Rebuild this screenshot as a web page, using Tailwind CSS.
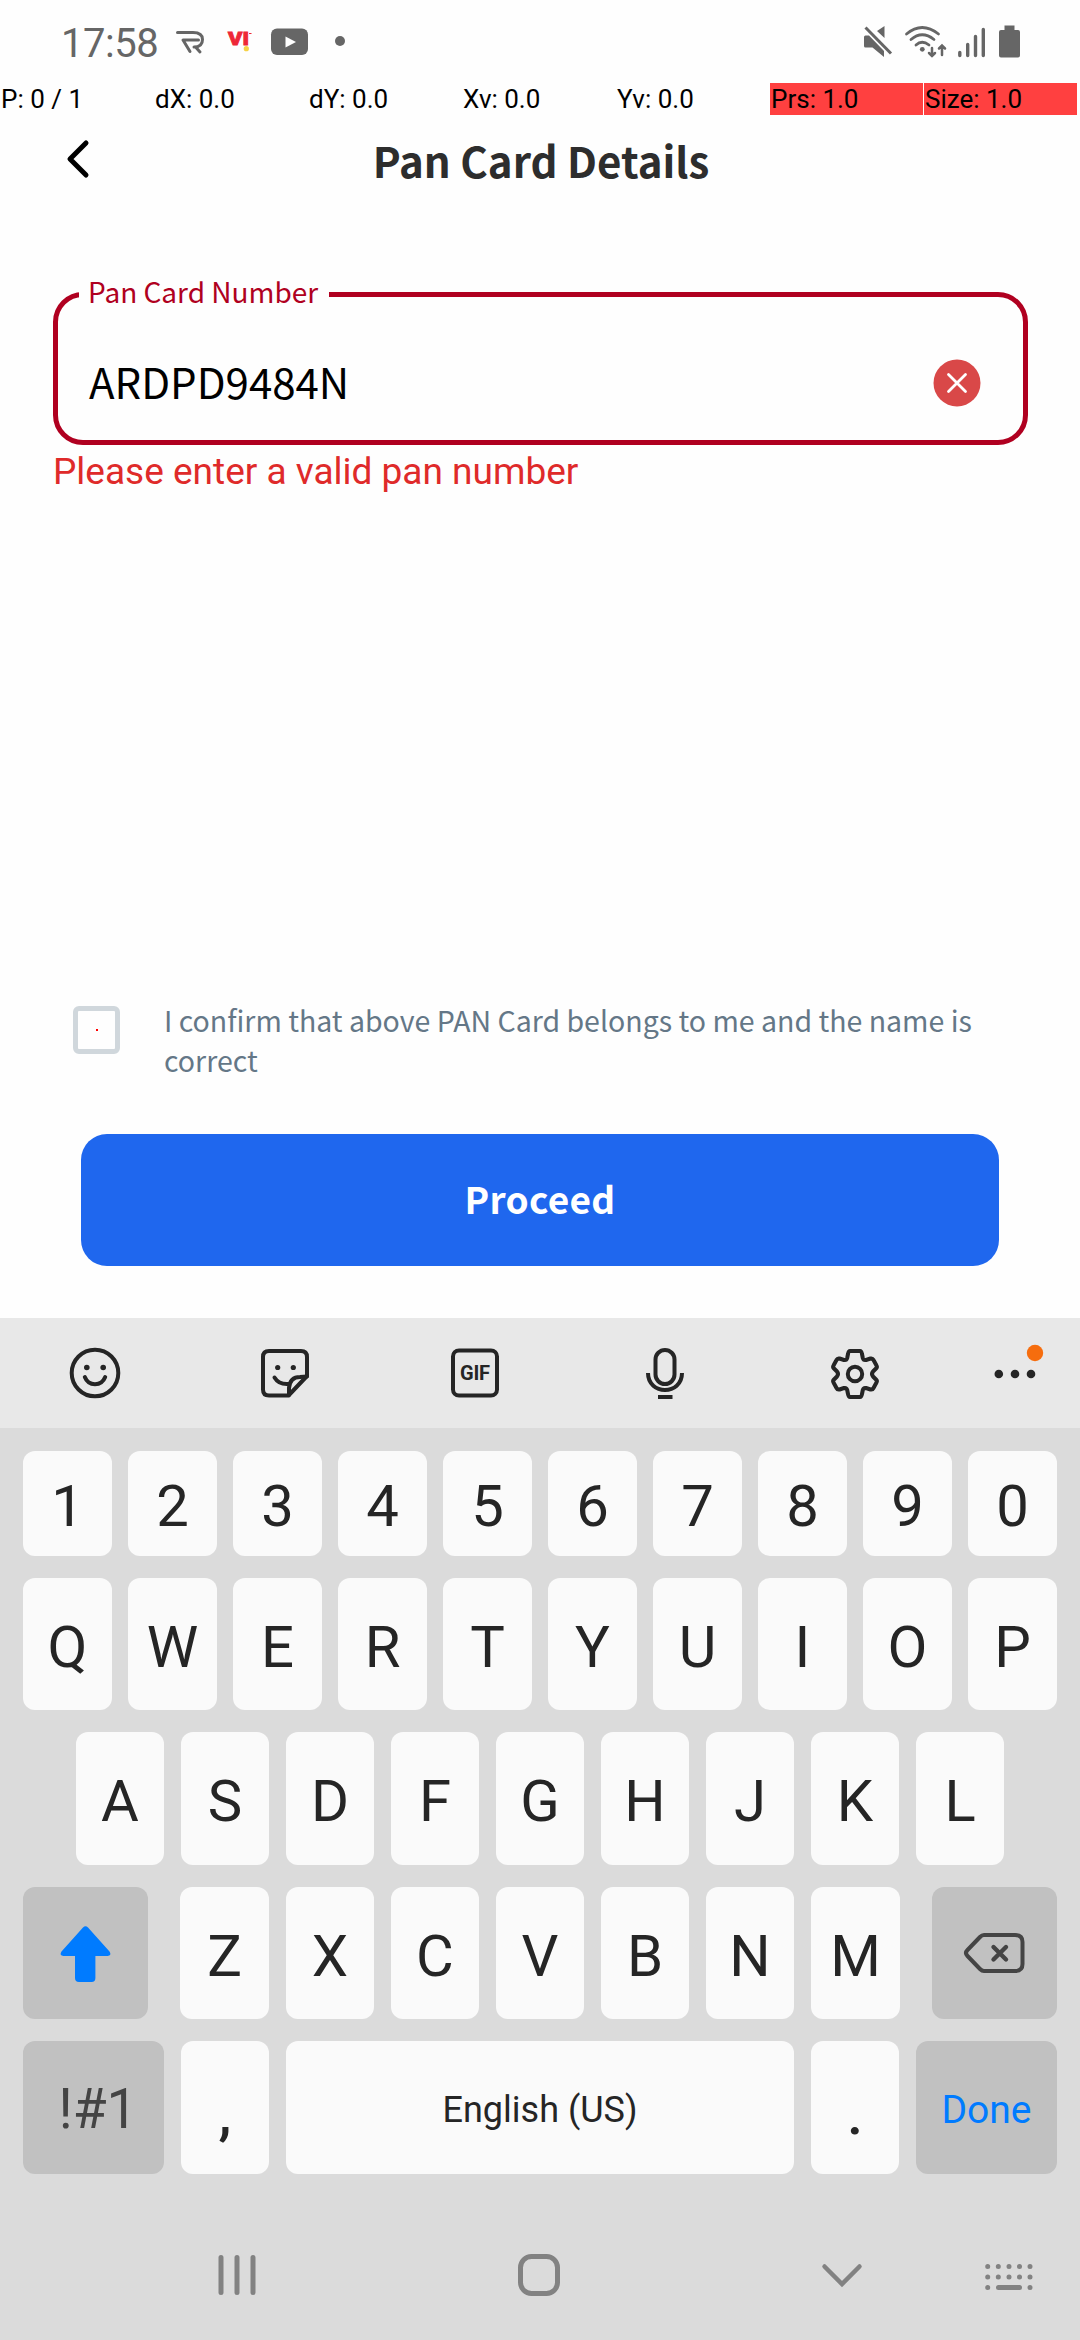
<!DOCTYPE html>
<html lang="en">
<head>
<meta charset="utf-8">
<title>Pan Card Details</title>
<script src="https://cdn.jsdelivr.net/npm/@tailwindcss/browser@4"></script>
</head>
<body class="w-[1080px] h-[2340px] overflow-hidden bg-[#fefefe] font-['Roboto',sans-serif] flex flex-col">

<!-- Status bar -->
<header class="h-[83px] flex shrink-0 text-[#666]">
  <div class="w-[112px] pl-[61px] pt-[20px] text-[40px] leading-[47px] tracking-[-0.5px] whitespace-nowrap">17:58</div>
  <svg class="w-[968px] h-[83px]" viewBox="112 0 968 83" fill="none">
    <g stroke="#666" stroke-width="3" stroke-linecap="round" stroke-linejoin="round">
      <path d="M177.500 32.500H193Q202.500 32.500 202.500 39.500Q202.500 47 194 47H195.500L200 52"/>
      <path d="M198.500 40H183L190 51.500"/>
    </g>
    <text x="228" y="45" font-family="Roboto" font-weight="900" font-size="18" textLength="21" lengthAdjust="spacingAndGlyphs" fill="#ee2737" stroke="#ee2737" stroke-width="0.8">VI</text>
    <path d="M249 33.500H251.500" stroke="#ee2737" stroke-width="1"/>
    <circle cx="246.300" cy="48.700" r="2.600" fill="#f6d245"/>
    <rect x="271" y="28.500" width="37" height="26.500" rx="6" fill="#666"/>
    <path d="M285.500 36.500L296 42L285.500 47.500Z" fill="#fefefe"/>
    <circle cx="340" cy="41" r="5" fill="#666"/>
    <!-- muted -->
    <path d="M864 37Q864 35.500 865.500 35.500H869L884 51V57L872.500 47.500H865.500Q864 47.500 864 46Z M884.500 26V38L877 31Z" fill="#666"/>
    <path d="M865.500 27.500L891 53.500" stroke="#666" stroke-width="3"/>
    <!-- wifi and signal -->
    <g stroke="#666" stroke-width="2.800" stroke-linecap="round">
      <path d="M906.500 34Q922 21 938.500 34M911 39.500Q922 30 934 39.500M916 45Q922 39.500 929 45"/>
      <path d="M932 48V56M929 53L932 56L935 53M942 55V45.500M939 48.500L942 45.500L945 48.500" stroke-width="2.500"/>
      <path d="M959.800 52.500V55.500M967.700 44.500V55.500M975.500 36.500V55.500M983.300 29.500V55.500" stroke-width="3.400"/>
    </g>
    <circle cx="922.300" cy="49.300" r="2.400" fill="#666"/>
    <path d="M1004.500 25.500H1014.500V30H1018Q1020 30 1020 32V55.500Q1020 57.500 1018 57.500H1001Q999 57.500 999 55.500V32Q999 30 1001 30H1004.500Z" fill="#666"/>
  </svg>
</header>

<!-- Pointer readout -->
<div class="h-8 shrink-0 flex gap-px text-[26px] leading-[32px] text-black whitespace-nowrap">
  <div class="w-[153px] pl-px">P: 0 / 1</div>
  <div class="w-[153px] pl-px">dX: 0.0</div>
  <div class="w-[153px] pl-px">dY: 0.0</div>
  <div class="w-[153px] pl-px">Xv: 0.0</div>
  <div class="w-[153px] pl-px">Yv: 0.0</div>
  <div class="w-[153px] pl-px bg-[#ff4040]">Prs: 1.0</div>
  <div class="w-[153px] pl-px bg-[#ff4040]">Size: 1.0</div>
</div>

<main class="h-[1203px] shrink-0 flex flex-col font-['Noto_Sans_CJK_SC',sans-serif]">
  <!-- Title -->
  <div class="h-[177px] shrink-0 flex">
    <svg class="w-[120px] h-[90px]" viewBox="0 115 120 90" fill="none" stroke="#000" stroke-width="5" stroke-linecap="round" stroke-linejoin="round"><path d="M86 143L70 159L86 175"/></svg>
    <h1 class="w-[842px] pt-[14px] text-center text-[42px] leading-[62px] font-bold text-[#2d2d2d] whitespace-nowrap">Pan Card Details</h1>
  </div>

  <!-- PAN field -->
  <div class="relative ml-[53px] w-[975px] h-[153px] shrink-0 border-[5px] border-[#b00020] rounded-[30px] flex items-start justify-between pl-[31px] pr-[42px]">
    <div class="absolute left-[21px] top-[-28px] w-[250px] h-[44px] pl-[9px] bg-[#fefefe] text-[28px] leading-[44px] text-[#b00020] whitespace-nowrap">Pan Card Number</div>
    <div class="pt-[54px] text-[42px] leading-[60px] text-black whitespace-nowrap">ARDPD9484N</div>
    <svg class="w-12 h-12 mt-[62px]" viewBox="0 0 48 48"><circle cx="24" cy="24" r="23.500" fill="#d94848"/><path d="M15.500 15.500L32.500 32.500M32.500 15.500L15.500 32.500" stroke="#fff" stroke-width="2.800" stroke-linecap="round"/></svg>
  </div>
  <p class="pl-[53px] pt-[5px] text-[37px] leading-[44px] text-[#df2a2a] font-['Roboto',sans-serif] whitespace-nowrap">Please enter a valid pan number</p>

  <!-- Consent -->
  <div class="mt-[506px] pl-[73px] flex h-[134px] shrink-0">
    <div class="mt-[6px] w-[47px] h-[48px] shrink-0 border-[5px] border-[#d0d7dc] rounded-[6px] flex items-center justify-center"><span class="w-[2px] h-[2px] bg-[#f00]"></span></div>
    <p class="ml-[44px] text-[28.5px] leading-[40px] text-[#647787] whitespace-nowrap">I confirm that above PAN Card belongs to me and the name is<br>correct</p>
  </div>
  <div class="ml-[81px] w-[918px] h-[132px] shrink-0 rounded-[26px] bg-[#1f67ee] text-white text-[37px] leading-[128px] font-bold tracking-[0.3px] text-center">Proceed</div>
</main>

<!-- Keyboard -->
<section class="h-[1022px] shrink-0 bg-[#dbdbdb] text-[#252525] flex flex-col">
  <svg class="w-[1080px] h-[110px] shrink-0 bg-[#e8e8e8]" viewBox="0 1318 1080 110" fill="none" stroke="#252525" stroke-width="4">
    <circle cx="95" cy="1373" r="23.300"/>
    <g fill="#252525" stroke="none"><circle cx="86.800" cy="1367.500" r="2.800"/><circle cx="103.200" cy="1367.500" r="2.800"/><circle cx="277.700" cy="1367.500" r="2.600"/><circle cx="293.300" cy="1367.500" r="2.600"/></g>
    <path d="M84.800 1377C88.500 1386.500 101.500 1386.500 105.200 1377" stroke-linecap="round"/>
    <path d="M307 1376V1357Q307 1351 301 1351H269Q263 1351 263 1357V1389.500Q263 1395.500 269 1395.500H288.500Z" stroke-linejoin="round"/>
    <path d="M274.500 1377.500Q279 1385 289 1384M289 1395V1388Q290 1377 300 1377L307 1376.500" stroke-linecap="round"/>
    <rect x="453" y="1350.500" width="44" height="45" rx="6"/>
    <text x="475" y="1380.300" text-anchor="middle" font-family="Roboto" font-weight="700" font-size="20" fill="#252525" stroke="none" textLength="30">GIF</text>
    <rect x="655.500" y="1350" width="19" height="34" rx="9.500"/>
    <path d="M648 1373C648 1395.500 682 1395.500 682 1373M658 1397H672.500"/>
    <path stroke-linejoin="round" d="M850 1351H860Q861.500 1351 862 1354L862.800 1358Q863.500 1360.500 866 1360L870.500 1358.500Q872.500 1358 873.500 1360L876.500 1365.500Q877.500 1367 876 1368.500L873 1371.500Q871 1374 873 1376.500L876 1379.500Q877.500 1381 876.500 1382.500L873.500 1388Q872.500 1390 870.500 1389.500L866 1388Q863.500 1387.500 862.800 1390L862 1394Q861.500 1397 860 1397H850Q848.500 1397 848 1394L847.200 1390Q846.500 1387.500 844 1388L839.500 1389.500Q837.500 1390 836.500 1388L833.500 1382.500Q832.500 1381 834 1379.500L837 1376.500Q839 1374 837 1371.500L834 1368.500Q832.500 1367 833.500 1365.500L836.500 1360Q837.500 1358 839.500 1358.500L844 1360Q846.500 1360.500 847.200 1358L848 1354Q848.500 1351 850 1351Z"/>
    <circle cx="855" cy="1374" r="7.200"/>
    <g fill="#252525" stroke="none"><circle cx="998.800" cy="1374" r="4.300"/><circle cx="1015" cy="1374" r="4.300"/><circle cx="1031" cy="1374" r="4.300"/><circle cx="1035" cy="1353" r="8.200" fill="#f66d0e"/></g>
  </svg>

  <div class="px-[23px] pt-[23px] flex flex-col gap-[22px] text-center text-[58px] whitespace-nowrap">
    <div class="flex gap-4 h-[105px] leading-[111px]">
      <div class="w-[89px] rounded-xl bg-[#fafafa]">1</div><div class="w-[89px] rounded-xl bg-[#fafafa]">2</div><div class="w-[89px] rounded-xl bg-[#fafafa]">3</div><div class="w-[89px] rounded-xl bg-[#fafafa]">4</div><div class="w-[89px] rounded-xl bg-[#fafafa]">5</div><div class="w-[89px] rounded-xl bg-[#fafafa]">6</div><div class="w-[89px] rounded-xl bg-[#fafafa]">7</div><div class="w-[89px] rounded-xl bg-[#fafafa]">8</div><div class="w-[89px] rounded-xl bg-[#fafafa]">9</div><div class="w-[89px] rounded-xl bg-[#fafafa]">0</div>
    </div>
    <div class="flex gap-4 h-[132px] leading-[138px]">
      <div class="w-[89px] rounded-xl bg-[#fafafa]">Q</div><div class="w-[89px] rounded-xl bg-[#fafafa]">W</div><div class="w-[89px] rounded-xl bg-[#fafafa]">E</div><div class="w-[89px] rounded-xl bg-[#fafafa]">R</div><div class="w-[89px] rounded-xl bg-[#fafafa]">T</div><div class="w-[89px] rounded-xl bg-[#fafafa]">Y</div><div class="w-[89px] rounded-xl bg-[#fafafa]">U</div><div class="w-[89px] rounded-xl bg-[#fafafa]">I</div><div class="w-[89px] rounded-xl bg-[#fafafa]">O</div><div class="w-[89px] rounded-xl bg-[#fafafa]">P</div>
    </div>
    <div class="flex gap-[17px] h-[133px] leading-[139px] justify-center">
      <div class="w-[88px] rounded-xl bg-[#fafafa]">A</div><div class="w-[88px] rounded-xl bg-[#fafafa]">S</div><div class="w-[88px] rounded-xl bg-[#fafafa]">D</div><div class="w-[88px] rounded-xl bg-[#fafafa]">F</div><div class="w-[88px] rounded-xl bg-[#fafafa]">G</div><div class="w-[88px] rounded-xl bg-[#fafafa]">H</div><div class="w-[88px] rounded-xl bg-[#fafafa]">J</div><div class="w-[88px] rounded-xl bg-[#fafafa]">K</div><div class="w-[88px] rounded-xl bg-[#fafafa]">L</div>
    </div>
    <div class="flex justify-between h-[132px] leading-[138px]">
      <div class="w-[125px] rounded-xl bg-[#c1c1c1]"><svg class="w-[125px] h-[132px]" viewBox="23 1887 125 132"><path d="M83 1927.500Q85.500 1925 88 1927.500L109.500 1951.500Q112 1955.500 107.500 1956H95.400V1978Q95.400 1982 91.500 1982H79Q75 1982 75 1978V1956H63.500Q59 1955.500 61.500 1951.500Z" fill="#007bff"/></svg></div>
      <div class="flex gap-[17px] w-[720px]">
        <div class="w-[89px] shrink-0 rounded-xl bg-[#fafafa]">Z</div><div class="w-[88px] shrink-0 rounded-xl bg-[#fafafa]">X</div><div class="w-[88px] shrink-0 rounded-xl bg-[#fafafa]">C</div><div class="w-[88px] shrink-0 rounded-xl bg-[#fafafa]">V</div><div class="w-[88px] shrink-0 rounded-xl bg-[#fafafa]">B</div><div class="w-[88px] shrink-0 rounded-xl bg-[#fafafa]">N</div><div class="w-[89px] shrink-0 rounded-xl bg-[#fafafa]">M</div>
      </div>
      <div class="w-[125px] rounded-xl bg-[#c1c1c1]"><svg class="w-[125px] h-[132px]" viewBox="932 1887 125 132" fill="none" stroke="#444" stroke-width="4" stroke-linecap="round" stroke-linejoin="round"><path d="M984 1935H1015Q1022.500 1935 1022.500 1942V1964Q1022.500 1971 1015 1971H984Q982 1971 980 1969L967.500 1956Q964.500 1953 967.500 1950L980 1937Q982 1935 984 1935Z"/><path d="M993.500 1947L1006 1959.500M1006 1947L993.500 1959.500" stroke-width="4.400"/></svg></div>
    </div>
    <div class="flex gap-[17px] h-[133px]">
      <div class="w-[141px] rounded-xl bg-[#c1c1c1] text-[#444] text-[55px] leading-[136px] pl-[9px]">!#1</div>
      <div class="w-[88px] rounded-xl bg-[#fafafa] leading-[147px] font-medium">,</div>
      <div class="w-[508px] rounded-xl bg-[#fafafa] text-[36px] leading-[138px]">English (US)</div>
      <div class="w-[88px] rounded-xl bg-[#fafafa] leading-[147px] font-medium">.</div>
      <div class="w-[141px] rounded-xl bg-[#c1c1c1] text-[#007bff] text-[39px] leading-[138px]">Done</div>
    </div>
  </div>

  <!-- Navigation bar -->
  <svg class="w-[1080px] h-[166px] shrink-0" viewBox="0 2174 1080 166" fill="none" stroke="#828282" stroke-width="5" stroke-linecap="round">
    <path d="M221 2257.500V2292.500M237 2257.500V2292.500M253 2257.500V2292.500"/>
    <rect x="520.500" y="2256.500" width="37" height="37" rx="11"/>
    <path d="M824.500 2266.500L842 2284L859.500 2266.500" stroke-width="4.500"/>
    <path d="M987.700 2266.500h.01M998.300 2266.500h.01M1009 2266.500h.01M1019.500 2266.500h.01M1030 2266.500h.01M987.700 2277h.01M998.300 2277h.01M1009 2277h.01M1019.500 2277h.01M1030 2277h.01M987.700 2287.500h.01M998.500 2287.500H1019.500M1030 2287.500h.01"/>
  </svg>
</section>
</body>
</html>
